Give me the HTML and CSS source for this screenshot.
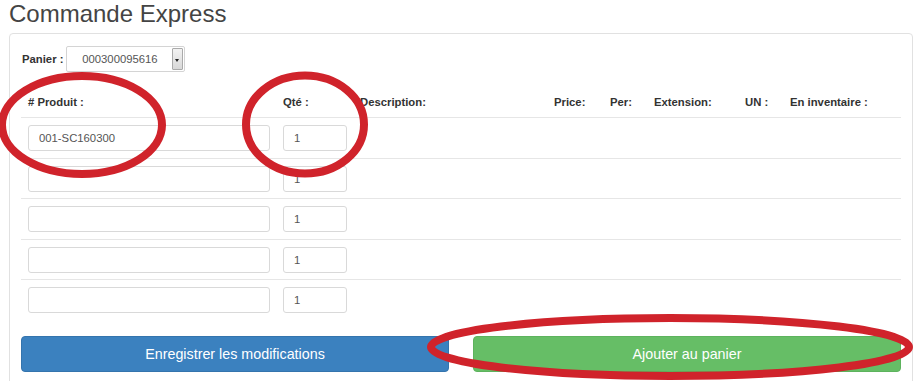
FILE: index.html
```html
<!DOCTYPE html>
<html lang="fr">
<head>
  <meta charset="UTF-8" />
  <title>Commande Express</title>
  <link rel="stylesheet" href="styles.css">
</head>
<body>
  <div class="page">
    <h1 class="title">Commande Express</h1>

    <div class="panel">
      <div class="cart">
        <span class="label">Panier :</span>
        <div class="select">
          <span class="select-value">000300095616</span>
          <span class="select-arrow"></span>
        </div>
      </div>

      <div class="grid head">
        <div class="cell">#&nbsp;Produit :</div>
        <div class="cell">Qté :</div>
        <div class="cell">Description:</div>
        <div class="cell">Price:</div>
        <div class="cell">Per:</div>
        <div class="cell">Extension:</div>
        <div class="cell">UN :</div>
        <div class="cell">En inventaire :</div>
      </div>

      <div class="grid row">
        <div class="cell"><input class="field product" type="text" value="001-SC160300" /></div>
        <div class="cell"><input class="field qty" type="text" value="1" /></div>
      </div>
      <div class="grid row">
        <div class="cell"><input class="field product" type="text" value="" /></div>
        <div class="cell"><input class="field qty" type="text" value="1" /></div>
      </div>
      <div class="grid row">
        <div class="cell"><input class="field product" type="text" value="" /></div>
        <div class="cell"><input class="field qty" type="text" value="1" /></div>
      </div>
      <div class="grid row">
        <div class="cell"><input class="field product" type="text" value="" /></div>
        <div class="cell"><input class="field qty" type="text" value="1" /></div>
      </div>
      <div class="grid row">
        <div class="cell"><input class="field product" type="text" value="" /></div>
        <div class="cell"><input class="field qty" type="text" value="1" /></div>
      </div>

      <div class="actions">
        <button class="btn btn-save">Enregistrer les modifications</button>
        <button class="btn btn-add">Ajouter au panier</button>
      </div>
    </div>
  </div>

  <svg class="marks" width="918" height="381" viewBox="0 0 918 381">
    <ellipse cx="82" cy="125" rx="80" ry="49" />
    <ellipse cx="305" cy="124.5" rx="59" ry="49" />
    <ellipse cx="670" cy="347" rx="239" ry="29" />
  </svg>
</body>
</html>
```

FILE: styles.css
```css
* {
  margin: 0;
  padding: 0;
  box-sizing: border-box;
  font-family: 'Liberation Sans', Arial, sans-serif;
}

body {
  background: #fff;
  color: #333;
  width: 918px;
  height: 381px;
  overflow: hidden;
  position: relative;
}

.page {
  padding: 0 5px 0 9px;
}

.title {
  font-size: 24px;
  font-weight: 400;
  color: #444;
  line-height: 28px;
  height: 33px;
}

.panel {
  border: 1px solid #e1e1e1;
  border-radius: 4px;
  padding: 12px 11px 20px 11px;
  width: 904px;
  height: 360px;
}

.cart {
  display: flex;
  align-items: center;
  gap: 3px;
  height: 26px;
}

.label {
  font-size: 11.3px;
  font-weight: 700;
  color: #333;
  padding-left: 1px;
}

.select {
  display: flex;
  align-items: stretch;
  width: 119px;
  height: 26px;
  border: 1px solid #d4d4d4;
  border-radius: 2px;
  background: #fff;
}

.select-value {
  flex: 1;
  font-size: 11.3px;
  color: #555;
  line-height: 24px;
  text-align: center;
}

.select-arrow {
  width: 11px;
  margin: 1px 1px 1px 0;
  background: linear-gradient(#f2f2f2, #d8d8d8);
  border: 1px solid #aaa;
  border-radius: 1px;
  position: relative;
}

.select-arrow::after {
  content: "";
  position: absolute;
  left: 2px;
  top: 10px;
  border-left: 2.5px solid transparent;
  border-right: 2.5px solid transparent;
  border-top: 3px solid #222;
}

.grid {
  display: grid;
  grid-template-columns: 255px 77px 194px 56px 44px 91px 45px 118px;
}

.head {
  margin-top: 23px;
  font-size: 11.3px;
  font-weight: 700;
  color: #333;
  line-height: 14px;
  padding-bottom: 8px;
}

.head .cell {
  padding-left: 7px;
  white-space: nowrap;
}

.row {
  border-top: 1px solid #e6e6e6;
  padding: 7px 0 6.5px 0;
}

.row .cell {
  padding-left: 7px;
}

.field {
  display: block;
  height: 26px;
  border: 1px solid #d9d9d9;
  border-radius: 3px;
  font-size: 11.3px;
  color: #555;
  padding: 0 10px;
  outline: none;
  background: #fff;
}

.product {
  width: 242px;
}

.qty {
  width: 64px;
}

.actions {
  display: grid;
  grid-template-columns: 428px 428px;
  gap: 24px;
  margin-top: 16px;
}

.btn {
  height: 36px;
  border: 1px solid transparent;
  border-radius: 4px;
  color: #fff;
  font-size: 14.3px;
  cursor: pointer;
}

.btn-save {
  background: #3b81bf;
  border-color: #3474ad;
}

.btn-add {
  background: #66be66;
  border-color: #5db35d;
}

.marks {
  position: absolute;
  left: 0;
  top: 0;
  pointer-events: none;
}

.marks ellipse {
  fill: none;
  stroke: #d0232b;
  stroke-width: 8;
}
```
